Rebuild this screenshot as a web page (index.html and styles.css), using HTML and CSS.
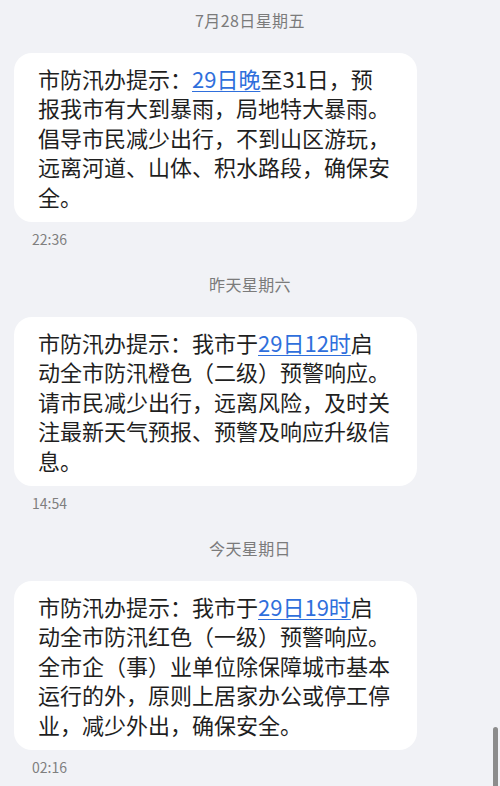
FILE: index.html
```html
<!DOCTYPE html>
<html lang="zh-CN">
<head>
    <meta charset="UTF-8">
    <meta name="viewport" content="width=device-width, initial-scale=1.0">
    <title>短信</title>
    <link rel="stylesheet" href="styles.css">
</head>
<body>

    <div class="thread">
        <div class="day">7月28日星期五</div>
        <div class="msg">市防汛办提示：<a class="link">29日晚</a>至31日，预<br>报我市有大到暴雨，局地特大暴雨。<br>倡导市民减少出行，不到山区游玩，<br>远离河道、山体、积水路段，确保安<br>全。</div>
        <div class="time">22:36</div>

        <div class="day">昨天星期六</div>
        <div class="msg">市防汛办提示：我市于<a class="link">29日12时</a>启<br>动全市防汛橙色（二级）预警响应。<br>请市民减少出行，远离风险，及时关<br>注最新天气预报、预警及响应升级信<br>息。</div>
        <div class="time">14:54</div>

        <div class="day">今天星期日</div>
        <div class="msg">市防汛办提示：我市于<a class="link">29日19时</a>启<br>动全市防汛红色（一级）预警响应。<br>全市企（事）业单位除保障城市基本<br>运行的外，原则上居家办公或停工停<br>业，减少外出，确保安全。</div>
        <div class="time">02:16</div>
    </div>

    <div class="scrollbar"></div>

</body>
</html>
```

FILE: styles.css
```css
body {
    margin: 0;
    background: #f1f2f6;
    font-family: "Noto Sans CJK SC", "Noto Sans", sans-serif;
    overflow: hidden;
}
.thread {
    padding: 10px 0 0 14px;
}
.day {
    text-align: center;
    font-size: 16px;
    letter-spacing: 0.4px;
    line-height: 20px;
    color: #7b7b7b;
    margin-right: 14px;
}
.day + .msg {
    margin-top: 23px;
}
.msg {
    width: 352px;
    background: #fff;
    border-radius: 18px;
    padding: 11px 27px 11px 24px;
    font-size: 22px;
    line-height: 29.4px;
    color: #1f1f1f;
    white-space: nowrap;
}
.link {
    color: #2f6fdc;
    text-decoration: underline;
    text-underline-offset: 3px;
    text-decoration-thickness: 1px;
}
.time {
    margin: 8px 0 26px 18px;
    font-size: 14px;
    line-height: 18px;
    color: #7f7f7f;
}
.scrollbar {
    position: fixed;
    right: 2px;
    top: 727px;
    bottom: 0;
    width: 5px;
    background: #8c8c8c;
    border-radius: 3px 3px 0 0;
}
```
